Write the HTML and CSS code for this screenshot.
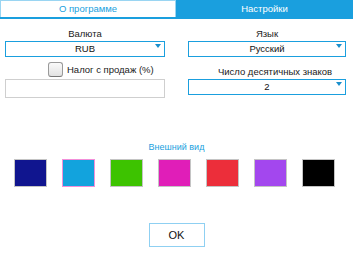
FILE: index.html
```html
<!DOCTYPE html>
<html lang="ru">
<head>
<meta charset="utf-8">
<link rel="stylesheet" href="styles.css">
</head>
<body>
<div class="tabs">
  <div class="tab">О программе</div>
  <div class="tab active">Настройки</div>
</div>
<div class="form">
  <div class="col left">
    <div class="label">Валюта</div>
    <div class="select">RUB<span class="arrow"></span></div>
    <div class="check-row">
      <span class="checkbox"></span>
      <span class="check-label">Налог с продаж (%)</span>
    </div>
    <div class="input"></div>
  </div>
  <div class="col right">
    <div class="label">Язык</div>
    <div class="select">Русский<span class="arrow"></span></div>
    <div class="label label2">Число десятичных знаков</div>
    <div class="select">2<span class="arrow"></span></div>
  </div>
</div>
<div class="appearance">Внешний вид</div>
<div class="swatches">
  <div class="swatch navy"></div>
  <div class="swatch cyan selected"></div>
  <div class="swatch green"></div>
  <div class="swatch magenta"></div>
  <div class="swatch red"></div>
  <div class="swatch purple"></div>
  <div class="swatch black"></div>
</div>
<div class="actions">
  <div class="ok">OK</div>
</div>
</body>
</html>
```

FILE: styles.css
```css
html, body {
  margin: 0;
  padding: 0;
  background: #fff;
}
body {
  width: 353px;
  height: 253px;
  font-family: "Liberation Sans", Arial, sans-serif;
  font-size: 9.5px;
  color: #1a1a1a;
  overflow: hidden;
}
.tabs {
  display: flex;
  border-bottom: 2px solid #1a9fde;
}
.tab {
  flex: 0 0 176px;
  box-sizing: border-box;
  height: 17px;
  line-height: 16px;
  text-align: center;
  color: #1a9fde;
  border: 1px solid #9ad5f2;
  border-bottom: none;
}
.tab.active {
  flex: 1 1 auto;
  background: #1a9fde;
  border-color: #1a9fde;
  color: #fff;
}
.form {
  display: grid;
  grid-template-columns: 160px 158px;
  column-gap: 23px;
  padding: 8px 0 0 5px;
}
.col {
  display: flex;
  flex-direction: column;
}
.label {
  height: 14px;
  line-height: 13px;
  text-align: center;
}
.label2 {
  margin-top: 8px;
  height: 14px;
  padding-left: 16px;
}
.select {
  position: relative;
  box-sizing: border-box;
  height: 16px;
  line-height: 14px;
  border: 1px solid #1a9fde;
  text-align: center;
  color: #111;
}
.arrow {
  position: absolute;
  right: 3px;
  top: 2px;
  width: 0;
  height: 0;
  border-left: 3px solid transparent;
  border-right: 3px solid transparent;
  border-top: 4px solid #1a8fcc;
}
.check-row {
  display: flex;
  align-items: center;
  margin: 5px 0 0 43px;
  height: 15px;
  gap: 4px;
  white-space: nowrap;
}
.checkbox {
  flex: 0 0 auto;
  box-sizing: border-box;
  width: 15px;
  height: 15px;
  border: 1px solid #9a9a9a;
  border-bottom-color: #777;
  border-radius: 3px;
  background: linear-gradient(#fafafa, #e2e2e2);
}
.check-label {
  color: #1a1a1a;
}
.input {
  box-sizing: border-box;
  margin-top: 2px;
  height: 19px;
  border: 1px solid #cfcfcf;
}
.appearance {
  margin-top: 43px;
  text-align: center;
  color: #1a9fde;
  font-size: 9px;
  line-height: 12px;
}
.swatches {
  display: flex;
  gap: 15px;
  padding-left: 14px;
  margin-top: 6px;
}
.swatch {
  box-sizing: border-box;
  width: 33px;
  height: 28px;
  border: 1px solid #c4c4c4;
}
.swatch.selected { border-color: #f38fd9; }
.navy { background: #10158f; }
.cyan { background: #12a3dd; }
.green { background: #3dc300; }
.magenta { background: #e01eb8; }
.red { background: #ec2e3a; }
.purple { background: #a347ee; }
.black { background: #000; }
.actions {
  display: flex;
  justify-content: center;
  margin-top: 36px;
}
.ok {
  box-sizing: border-box;
  width: 56px;
  height: 24px;
  line-height: 22px;
  border: 1px solid #8fd0f2;
  text-align: center;
  font-size: 11px;
  color: #111;
}
```
